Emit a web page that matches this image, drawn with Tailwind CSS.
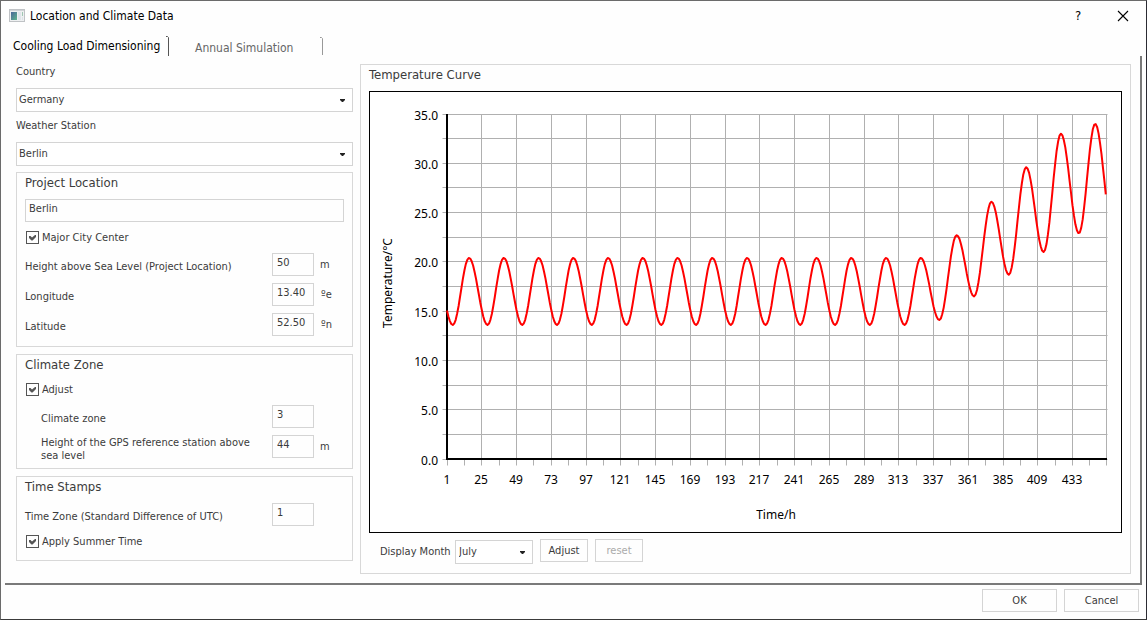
<!DOCTYPE html>
<html lang="en">
<head>
  <meta charset="UTF-8">
  <meta name="viewport" content="width=device-width, initial-scale=1.0">
  <title>Location and Climate Data</title>
  <script src="https://cdn.jsdelivr.net/npm/@tailwindcss/browser@4"></script>
</head>
<body class="bg-[#2b2b33]">

  <div class="flex flex-col min-h-screen bg-[#fefefe] border-t border-l border-[#6b6b6b] border-b border-b-[#3a3a3a] border-r border-r-[#2b2b33] font-['DejaVu_Sans_Condensed','Noto_Sans',sans-serif] text-[11px] leading-[14px] text-[#3b3b3b]">

    <!-- Title bar -->
    <header class="flex items-center h-[30px] pl-2 pr-[17px] text-xs text-black">
      <svg class="w-4 h-4" viewBox="0 0 16 16" aria-hidden="true">
        <defs>
          <linearGradient id="pane" x1="0" y1="0" x2="1" y2="1">
            <stop offset="0" stop-color="#4a6699"/>
            <stop offset="1" stop-color="#5fb58c"/>
          </linearGradient>
        </defs>
        <rect x="0.5" y="1.5" width="15" height="12" fill="#eef0f1" stroke="#bfc2c5"/>
        <rect x="1" y="2" width="14" height="1" fill="#d0d3d6"/>
        <rect x="2" y="4" width="6" height="8" fill="url(#pane)"/>
        <rect x="9" y="4" width="3" height="8" fill="#dfe5ea"/>
        <rect x="13" y="4" width="1" height="4" fill="#9fc6b2"/>
        <rect x="13" y="9" width="1" height="3" fill="#dde2e8"/>
      </svg>
      <h1 class="ml-[5px]">Location and Climate Data</h1>
      <button class="ml-auto w-5 text-center text-[13px]" aria-label="Help">?</button>
      <button class="ml-[29px]" aria-label="Close">
        <svg class="w-3 h-3" viewBox="0 0 12 12" stroke="#000" stroke-width="1.1" fill="none">
          <path d="M1 1L11 11M11 1L1 11"/>
        </svg>
      </button>
    </header>

    <!-- Tabs -->
    <nav class="flex h-[25px] pt-1 pl-3 text-xs">
      <button class="flex items-center w-[156px] text-black whitespace-nowrap">
        <span class="flex-1 text-left">Cooling Load Dimensioning</span>
        <svg class="w-[3px] h-5" viewBox="0 0 3 20" stroke="#555" fill="none"><path d="M0 .5H1.5L2.5 1.5V20"/></svg>
      </button>
      <button class="flex items-center w-[154px] pl-[26px] text-[#666] whitespace-nowrap">
        <span class="flex-1 text-left pt-1">Annual Simulation</span>
        <svg class="w-[3px] h-[18px]" viewBox="0 0 3 18" stroke="#999" fill="none"><path d="M0 .5H1.5L2.5 1.5V18"/></svg>
      </button>
    </nav>

    <main class="flex flex-1 items-start gap-[7px] ml-1 mr-1 pt-2 pb-2 pl-[11px] pr-[9px] border-r-2 border-b-2 border-[#7a7a7a]">

      <div class="w-[337px] shrink-0">
        <label for="country" class="block pt-px mb-[9px]">Country</label>
        <div class="relative mb-[6px]">
          <select id="country" class="appearance-none block w-full h-6 pl-[2px] pb-px border border-[#d4d4d4] bg-white">
            <option>Germany</option>
          </select>
          <svg class="absolute right-2 top-[11px] w-[5px] h-[3px] pointer-events-none" viewBox="0 0 5 3"><path d="M0 0H5V1L3 3H2L0 1Z" fill="#222"/></svg>
        </div>

        <label for="station" class="block pt-px mb-[9px]">Weather Station</label>
        <div class="relative mb-[6px]">
          <select id="station" class="appearance-none block w-full h-6 pl-[2px] pb-px border border-[#d4d4d4] bg-white">
            <option>Berlin</option>
          </select>
          <svg class="absolute right-2 top-[11px] w-[5px] h-[3px] pointer-events-none" viewBox="0 0 5 3"><path d="M0 0H5V1L3 3H2L0 1Z" fill="#222"/></svg>
        </div>

        <section class="mb-[7px] pt-[2px] pb-[10px] px-2 border border-[#d8d8d8]">
          <h2 class="text-[13px] leading-4">Project Location</h2>
          <input type="text" value="Berlin" aria-label="Project Location" class="block w-full h-[23px] mt-2 pl-[3px] pb-1 border border-[#d4d4d4]">
          <label class="relative flex items-center gap-[3px] h-[13px] mt-[9px] ml-px">
            <input type="checkbox" checked class="appearance-none w-[13px] h-[13px] border border-[#555]">
            <svg class="absolute left-0 top-0 w-[13px] h-[13px] pointer-events-none" viewBox="0 0 13 13" fill="#555"><path d="M3 5H4.5L6 6.5L9 4H10V6L6.5 9.5H5.5L3 7Z"/></svg>
            Major City Center
          </label>
          <div class="grid grid-cols-[247px_42px_1fr] gap-y-[7px] items-center mt-[9px]">
            <label for="height" class="pt-1">Height above Sea Level (Project Location)</label>
            <input id="height" type="text" value="50" class="h-[23px] pl-1 pb-1 border border-[#d4d4d4]">
            <span class="pl-[6px]">m</span>
            <label for="longitude" class="pt-1">Longitude</label>
            <input id="longitude" type="text" value="13.40" class="h-[23px] pl-1 pb-1 border border-[#d4d4d4]">
            <span class="pl-[7px]">ºe</span>
            <label for="latitude" class="pt-1">Latitude</label>
            <input id="latitude" type="text" value="52.50" class="h-[23px] pl-1 pb-1 border border-[#d4d4d4]">
            <span class="pl-[7px]">ºn</span>
          </div>
        </section>

        <section class="mb-[7px] pt-[2px] pb-[10px] px-2 border border-[#d8d8d8]">
          <h2 class="text-[13px] leading-4">Climate Zone</h2>
          <label class="relative flex items-center gap-[3px] h-[13px] mt-[10px] ml-px">
            <input type="checkbox" checked class="appearance-none w-[13px] h-[13px] border border-[#555]">
            <svg class="absolute left-0 top-0 w-[13px] h-[13px] pointer-events-none" viewBox="0 0 13 13" fill="#555"><path d="M3 5H4.5L6 6.5L9 4H10V6L6.5 9.5H5.5L3 7Z"/></svg>
            Adjust
          </label>
          <div class="grid grid-cols-[247px_42px_1fr] gap-y-[7px] items-center mt-[9px]">
            <label for="zone" class="pl-4 pt-1">Climate zone</label>
            <input id="zone" type="text" value="3" class="h-[23px] pl-1 pb-1 border border-[#d4d4d4]">
            <span></span>
            <label for="gps" class="flex items-center h-[23px] pl-4 pr-4 pt-1 leading-[13px]">Height of the GPS reference station above sea level</label>
            <input id="gps" type="text" value="44" class="h-[23px] pl-1 pb-1 border border-[#d4d4d4]">
            <span class="pl-[6px]">m</span>
          </div>
        </section>

        <section class="pt-[2px] pb-3 px-2 border border-[#d8d8d8]">
          <h2 class="text-[13px] leading-4">Time Stamps</h2>
          <div class="grid grid-cols-[247px_42px_1fr] items-center mt-2">
            <label for="timezone" class="pt-1">Time Zone (Standard Difference of UTC)</label>
            <input id="timezone" type="text" value="1" class="h-[23px] pl-1 pb-1 border border-[#d4d4d4]">
          </div>
          <label class="relative flex items-center gap-[3px] h-[13px] mt-[9px] ml-px">
            <input type="checkbox" checked class="appearance-none w-[13px] h-[13px] border border-[#555]">
            <svg class="absolute left-0 top-0 w-[13px] h-[13px] pointer-events-none" viewBox="0 0 13 13" fill="#555"><path d="M3 5H4.5L6 6.5L9 4H10V6L6.5 9.5H5.5L3 7Z"/></svg>
            Apply Summer Time
          </label>
        </section>
      </div>

      <section class="flex-1 pt-[2px] pb-[9px] px-2 border border-[#d8d8d8]">
        <h2 class="text-[13px] leading-4 mb-2">Temperature Curve</h2>
        <div class="border border-black bg-white">
          <svg id="chart" class="block w-full h-auto font-['Noto_Sans',sans-serif] text-xs" viewBox="370 92 751 440" role="img" aria-label="Temperature over time"></svg>
        </div>
        <div class="flex items-start mt-[6px] pl-[11px]">
          <label for="month" class="w-[75px] pt-[6px] whitespace-nowrap">Display Month</label>
          <div class="relative w-[78px] pt-px">
            <select id="month" class="appearance-none block w-full h-6 pl-[3px] pb-px border border-[#d4d4d4] bg-white">
              <option>July</option>
            </select>
            <svg class="absolute right-2 top-3 w-[5px] h-[3px] pointer-events-none" viewBox="0 0 5 3"><path d="M0 0H5V1L3 3H2L0 1Z" fill="#222"/></svg>
          </div>
          <button class="w-12 h-[23px] ml-[7px] pt-px border border-[#d4d4d4]">Adjust</button>
          <button disabled class="w-12 h-[23px] ml-[7px] pt-px border border-[#d4d4d4] text-[#aaa]">reset</button>
        </div>
      </section>
    </main>

    <footer class="flex justify-end gap-[7px] pt-1 pb-[7px] pr-[7px]">
      <button class="w-[75px] h-[23px] pt-px border border-[#d4d4d4]">OK</button>
      <button class="w-[75px] h-[23px] pt-px border border-[#d4d4d4]">Cancel</button>
    </footer>
  </div>

  <script>
    const chart = document.getElementById('chart');
    const LEFT = 447, RIGHT = 1106, TOP = 114, BOTTOM = 459;
    const xAt = hour => LEFT + (hour - 1) * 1.448;
    const yAt = temp => BOTTOM - temp * (BOTTOM - TOP) / 35;

    // daily minimum and maximum as [hour, temperature]
    const turns = [[-8, 20.4]];
    for (let day = 0; day < 14; day++) {
      turns.push([5 + day * 24, 13.6], [16.2 + day * 24, 20.4]);
    }
    turns.push([341, 14.1], [353, 22.7], [365, 16.5], [377, 26.1], [389, 18.7], [401, 29.6],
      [413, 21], [425, 33], [437.4, 22.9], [448.6, 34], [461, 23]);

    function tempAt(hour) {
      const i = turns.findIndex(t => t[0] > hour);
      const [h0, t0] = turns[i - 1];
      const [h1, t1] = turns[i];
      const f = (hour - h0) / (h1 - h0);
      return t0 + (t1 - t0) * (1 - Math.cos(Math.PI * f)) / 2;
    }

    let grid = '', labels = '';
    for (let t = 0; t <= 35; t += 2.5) {
      const y = Math.floor(yAt(t));
      grid += `M${LEFT - 5} ${y}H${RIGHT + 1}`;
      if (t % 5 === 0) labels += `<text x="438" y="${y + 6}" text-anchor="end">${t.toFixed(1)}</text>`;
    }
    for (let h = 1; h < 456; h += 12) {
      const x = Math.floor(xAt(h));
      const major = (h - 1) % 24 === 0;
      grid += `M${x} ${major ? TOP : BOTTOM}V${BOTTOM + 6}`;
      if (major) labels += `<text x="${x}" y="484" text-anchor="middle">${h}</text>`;
    }
    grid += `M${RIGHT} ${TOP}V${BOTTOM + 6}`;

    let curve = '';
    for (let h = 1; h <= 456; h++) {
      curve += `${xAt(h).toFixed(1)},${yAt(tempAt(h)).toFixed(1)} `;
    }

    chart.innerHTML = `
      <path d="${grid}" transform="translate(.5 .5)" stroke="#b0b0b0" fill="none"/>
      <path d="M447 114V459H1107" stroke="#000" stroke-width="2" fill="none"/>
      <polyline points="${curve}" fill="none" stroke="#f00" stroke-width="2" stroke-linejoin="round"/>
      ${labels}
      <text x="776" y="519" text-anchor="middle">Time/h</text>
      <text transform="translate(392 283) rotate(-90)" text-anchor="middle">Temperature/°C</text>`;
  </script>

</body>
</html>
